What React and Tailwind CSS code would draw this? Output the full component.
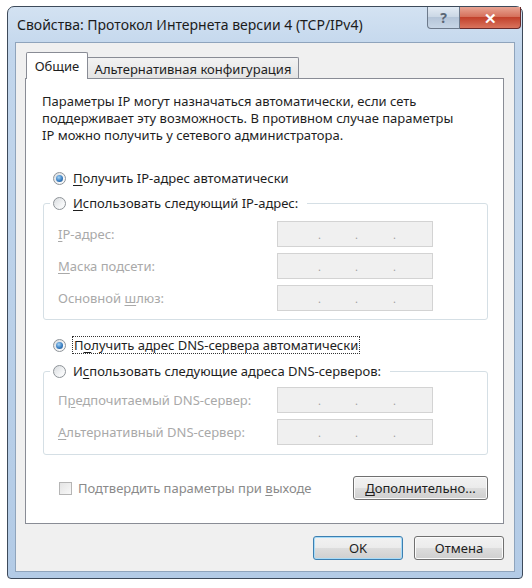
import React from "react";

const font = { fontFamily: '"Noto Sans", "Open Sans", sans-serif' };

function Radio({ checked }) {
  return (
    <span className="flex h-[13px] w-[13px] shrink-0 items-center justify-center rounded-full border border-[#8e9398] bg-[linear-gradient(135deg,#d9dcdf,#f7f8f9_70%)]">
      {checked && (
        <span className="h-[7px] w-[7px] rounded-full bg-[radial-gradient(circle_at_40%_35%,#a5d3f5,#3a7fc2_55%,#1b4c84)]" />
      )}
    </span>
  );
}

function U({ children }) {
  return <span className="underline underline-offset-2">{children}</span>;
}

function IpBox() {
  return (
    <div className="flex h-[26px] w-[156px] items-end border border-[#d3d3d3] bg-[#f0f0f0] pb-[6px] text-[11px] leading-none text-[#a0a0a0]">
      <span className="ml-[40px]">.</span>
      <span className="ml-[34px]">.</span>
      <span className="ml-[35px]">.</span>
    </div>
  );
}

function Row({ label, className = "" }) {
  return (
    <div className={`flex items-center pl-[14px] ${className}`}>
      <span className="w-[219px] text-[#a9a9a9]">{label}</span>
      <IpBox />
    </div>
  );
}

function Button({ children, primary, className = "" }) {
  return (
    <button
      className={`flex h-[24px] items-center justify-center rounded-[3px] border text-[#1e1e1e] ${
        primary
          ? "border-[#3c7fb1] bg-[linear-gradient(#f2f2f2_0%,#ebebeb_50%,#dddddd_50%,#cfcfcf_100%)] shadow-[inset_0_0_0_1px_#a8dbf7]"
          : "border-[#707070] bg-[linear-gradient(#f2f2f2_0%,#ebebeb_50%,#dddddd_50%,#cfcfcf_100%)] shadow-[inset_0_0_0_1px_#fbfbfb]"
      } ${className}`}
    >
      {children}
    </button>
  );
}

export default function App() {
  return (
    <div className="h-[588px] w-[532px] bg-white pl-[7px] pt-[6px] text-[13px] leading-[16px] text-[#1e1e1e]" style={font}>
      {/* Window */}
      <div className="flex h-[573px] w-[516px] flex-col rounded-t-[7px] rounded-b-[4px] border border-[#3d4a5a] bg-[linear-gradient(180deg,#d3e2f2,#c2d6ec_8%,#b3cbe6)] px-[7px] pb-[6px]">
        {/* Title bar */}
        <div className="flex h-[35px] items-start">
          <div className="mt-[9px] pl-[2px] text-[14px] leading-[18px] text-[#1b1b1b]">
            Свойства: Протокол Интернета версии 4 (TCP/IPv4)
          </div>
          <div className="ml-auto -mr-[6px] flex h-[22px]">
            <div className="flex w-[33px] items-center justify-center rounded-bl-[4px] border border-t-0 border-[#6d7a8b] bg-[linear-gradient(#e3ebf4,#c9d6e4_50%,#b5c5d8_50%,#c7d6e6)] text-[14px] font-bold text-[#5b6675]">
              ?
            </div>
            <div className="flex w-[61px] items-center justify-center rounded-br-[4px] border border-t-0 border-l-0 border-[#6a2a2a] bg-[linear-gradient(#e8a493,#d46c57_50%,#c2412c_50%,#d9735c)] text-[15px] font-bold text-white">
              ✕
            </div>
          </div>
        </div>

        {/* Client area */}
        <div className="flex flex-1 flex-col border border-[#8fa4bc] bg-[#f0f0f0] pl-[9px] pr-[10px] pt-[9px]">
          {/* Tabs */}
          <div className="flex h-[27px] items-end">
            <div className="relative z-10 ml-[1px] flex h-[27px] w-[62px] items-center justify-center rounded-t-[2px] border border-b-0 border-[#898c95] bg-white pb-[1px]">
              Общие
            </div>
            <div className="flex h-[22px] w-[211px] items-center justify-center rounded-tr-[2px] border border-b-0 border-l-0 border-[#898c95] bg-[linear-gradient(#f2f2f2,#e3e3e3)]">
              Альтернативная конфигурация
            </div>
          </div>

          {/* Panel */}
          <div className="-mt-px flex h-[446px] flex-col border border-[#898c95] bg-white">
            <div className="mt-[14px] pl-[16px] leading-[17px]">
              <div>Параметры IP могут назначаться автоматически, если сеть</div>
              <div>поддерживает эту возможность. В противном случае параметры</div>
              <div>IP можно получить у сетевого администратора.</div>
            </div>

            <div className="ml-[27px] mt-[26px] flex items-center gap-[7px]">
              <Radio checked />
              <span>
                <U>П</U>олучить IP-адрес автоматически
              </span>
            </div>

            <fieldset className="ml-[17px] mt-[9px] w-[445px] rounded-[3px] border border-[#d5dfe5] pb-[8px]">
              <legend className="ml-[6px] flex items-center gap-[7px] pl-[3px] pr-[9px]">
                <Radio />
                <span>
                  <U>И</U>спользовать следующий IP-адрес:
                </span>
              </legend>
              <Row className="mt-[10px]" label={<><U>I</U>P-адрес:</>} />
              <Row className="mt-[6px]" label={<><U>М</U>аска подсети:</>} />
              <Row className="mt-[6px]" label={<>Основной <U>ш</U>люз:</>} />
            </fieldset>

            <div className="ml-[27px] mt-[16px] flex items-center gap-[6px]">
              <Radio checked />
              <span className="border border-dotted border-[#333] px-px">
                П<U>о</U>лучить адрес DNS-сервера автоматически
              </span>
            </div>

            <fieldset className="ml-[17px] mt-[9px] w-[445px] rounded-[3px] border border-[#d5dfe5] pb-[9px]">
              <legend className="ml-[6px] flex items-center gap-[7px] pl-[3px] pr-[9px]">
                <Radio />
                <span>
                  И<U>с</U>пользовать следующие адреса DNS-серверов:
                </span>
              </legend>
              <Row className="mt-[8px]" label={<>П<U>р</U>едпочитаемый DNS-сервер:</>} />
              <Row className="mt-[6px]" label={<><U>А</U>льтернативный DNS-сервер:</>} />
            </fieldset>

            <div className="mt-[21px] flex items-center pl-[33px] pr-[15px]">
              <span className="h-[13px] w-[13px] border border-[#b5b5b5] bg-[linear-gradient(135deg,#e4e4e4,#f8f8f8)]" />
              <span className="ml-[6px] text-[#8a8a8a]">
                Подтвердить параметры при <U>в</U>ыходе
              </span>
              <Button className="ml-auto w-[135px]">
                <span>
                  <U>Д</U>ополнительно...
                </span>
              </Button>
            </div>
          </div>

          {/* Bottom buttons */}
          <div className="mt-[12px] flex justify-end gap-[11px]">
            <Button primary className="w-[90px]">OK</Button>
            <Button className="w-[90px]">Отмена</Button>
          </div>
        </div>
      </div>
    </div>
  );
}
